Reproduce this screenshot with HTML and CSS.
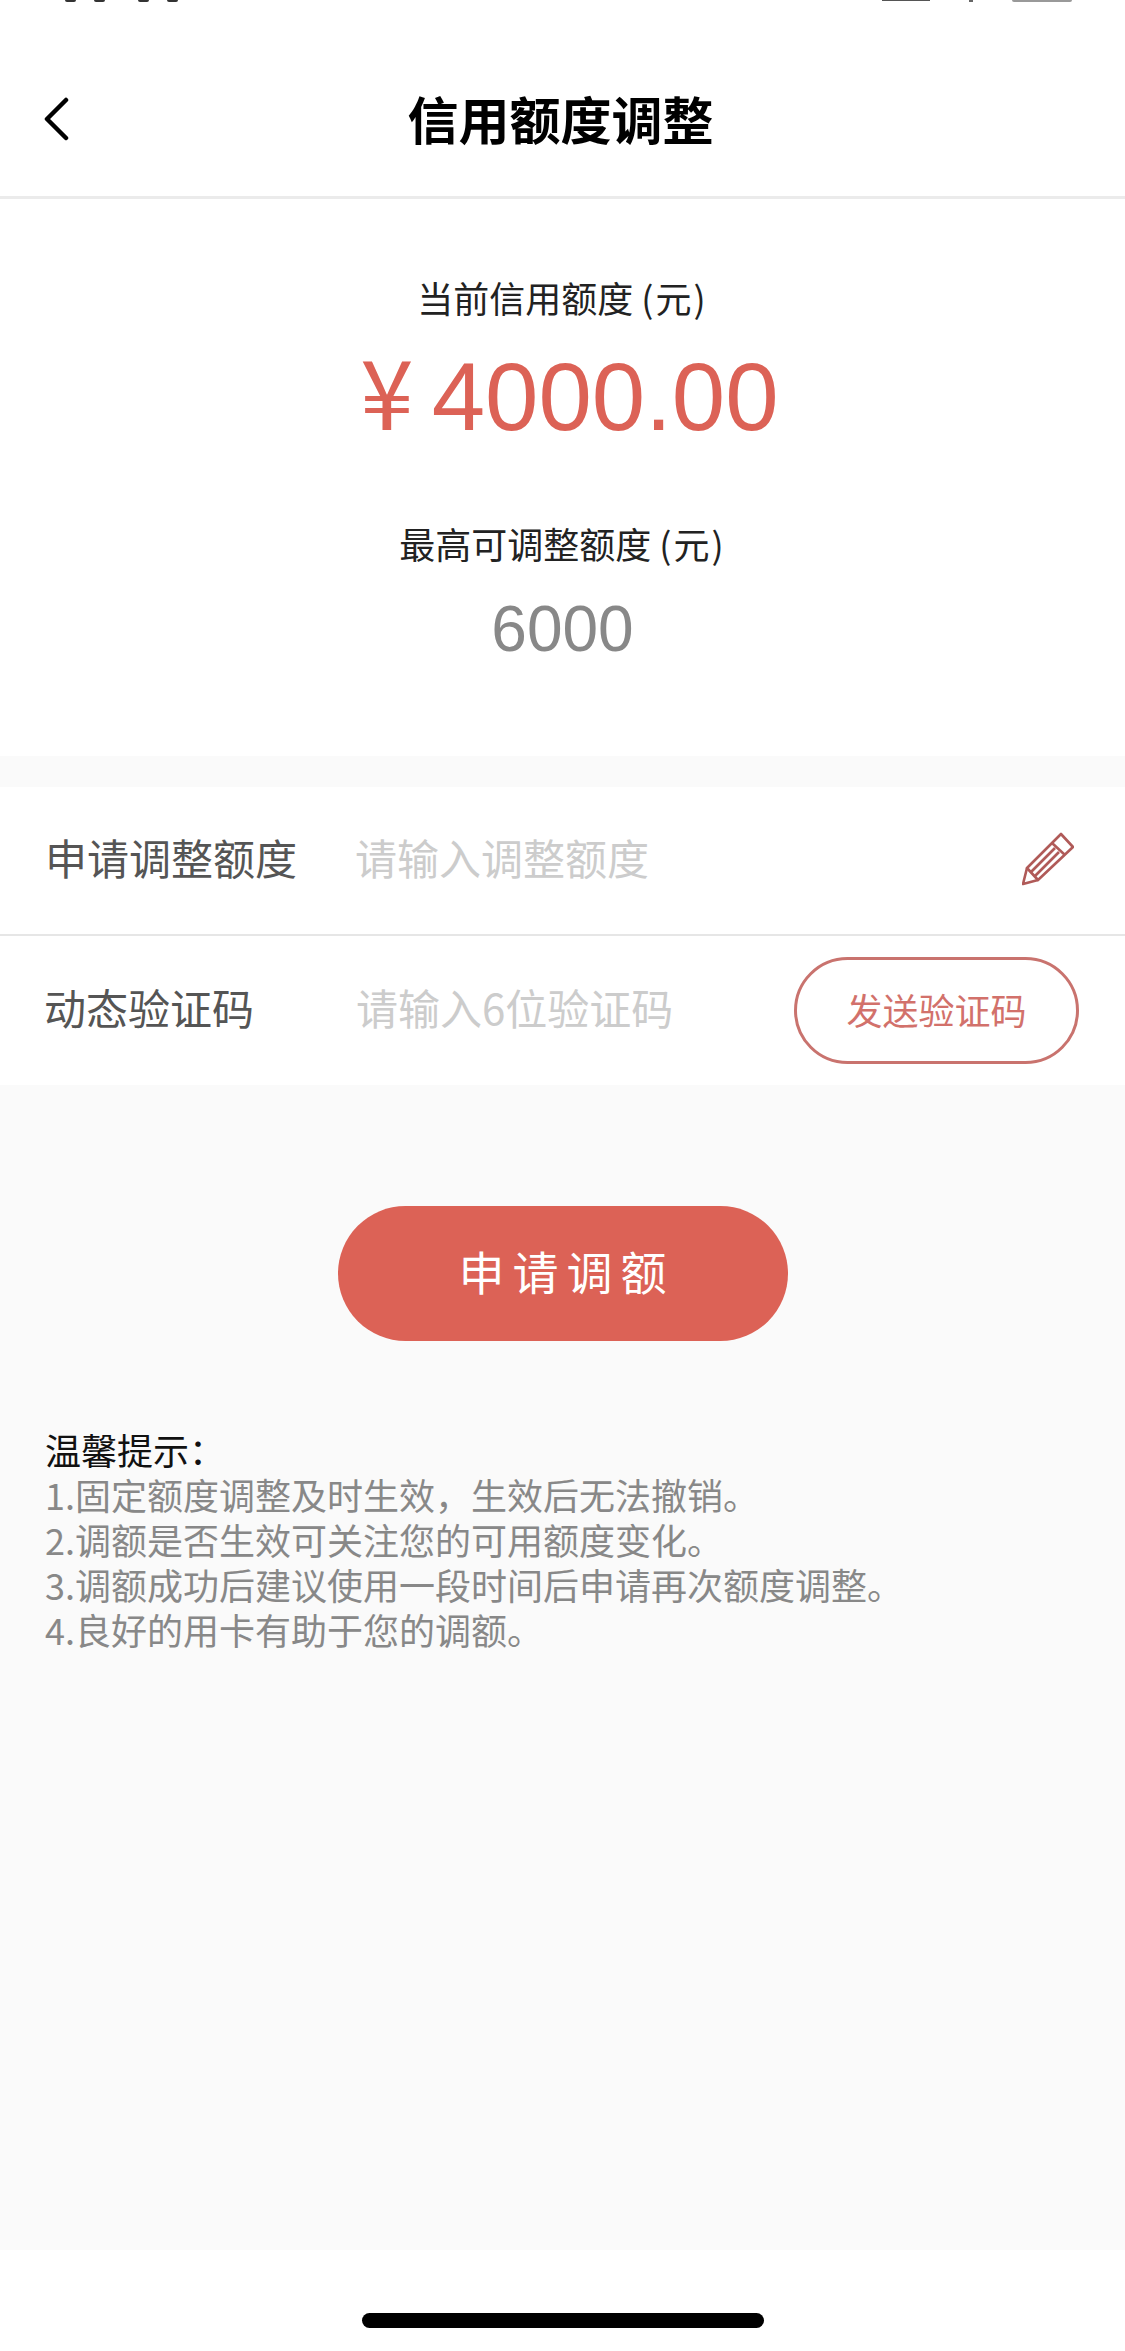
FILE: index.html
```html
<!DOCTYPE html>
<html lang="zh-CN">
<head>
    <meta charset="UTF-8">
    <meta name="viewport" content="width=device-width, initial-scale=1.0">
    <title>信用额度调整</title>
    <link rel="stylesheet" href="styles.css">
</head>
<body>
    <div class="status-bar">
        <span class="status-dot"></span>
        <span class="status-dot"></span>
        <span class="status-dot status-dot-wide"></span>
        <span class="status-dot"></span>
        <span class="status-signal"></span>
        <span class="status-wifi"></span>
        <span class="status-battery"></span>
    </div>
    <header class="nav-bar">
        <svg class="back-icon" viewBox="0 0 28 44" width="28" height="44">
            <path d="M24 3 L5 22 L24 41" fill="none" stroke="#000" stroke-width="4.5" stroke-linecap="round" stroke-linejoin="round"/>
        </svg>
        <h1 class="nav-title">信用额度调整</h1>
    </header>
    <section class="summary">
        <p class="summary-label">当前信用额度 <span class="summary-unit">(元)</span></p>
        <p class="summary-amount"><span class="summary-yen">¥</span>4000.00</p>
        <p class="summary-label summary-label-second">最高可调整额度 <span class="summary-unit">(元)</span></p>
        <p class="summary-max">6000</p>
    </section>
    <section class="form">
        <div class="form-row form-row-amount">
            <span class="form-label">申请调整额度</span>
            <span class="form-placeholder">请输入调整额度</span>
            <svg class="edit-icon" viewBox="0 0 52 54" width="52" height="54">
                <g fill="none" stroke="#b05a58" stroke-width="2.6" stroke-linejoin="round">
                    <path d="M5 36 L39 2 L51 15 L16 48 Z"/>
                    <path d="M5 36 L1 52 L16 48"/>
                    <path d="M30 11 L43 23"/>
                    <path d="M9 40 L33 16"/>
                    <path d="M13 44 L37 20"/>
                </g>
            </svg>
        </div>
        <div class="form-row form-row-code">
            <span class="form-label">动态验证码</span>
            <span class="form-placeholder">请输入6位验证码</span>
            <button class="send-btn">发送验证码</button>
        </div>
    </section>
    <main class="content">
        <button class="apply-btn">申请调额</button>
        <div class="tips">
            <p class="tips-title">温馨提示：</p>
            <p>1.固定额度调整及时生效，生效后无法撤销。</p>
            <p>2.调额是否生效可关注您的可用额度变化。</p>
            <p>3.调额成功后建议使用一段时间后申请再次额度调整。</p>
            <p>4.良好的用卡有助于您的调额。</p>
        </div>
    </main>
    <footer class="home-area">
        <div class="home-bar"></div>
    </footer>
</body>
</html>
```

FILE: styles.css
```css
* {
    box-sizing: border-box;
}
body {
    font-family: "Noto Sans CJK SC", "Liberation Sans", sans-serif;
    background-color: #fafafa;
    margin: 0;
    padding: 0;
    display: flex;
    flex-direction: column;
    min-height: 100vh;
}
p, h1 {
    margin: 0;
}
.status-bar {
    display: flex;
    align-items: flex-start;
    height: 3px;
    padding-left: 65px;
    overflow: hidden;
    background-color: #fff;
}
.status-dot {
    width: 11px;
    height: 2px;
    margin-right: 18px;
    background-color: #333;
    border-radius: 0 0 5px 5px;
}
.status-dot-wide {
    margin-left: 15px;
}
.status-signal {
    width: 48px;
    height: 1px;
    margin-left: 686px;
    background-color: #555;
}
.status-wifi {
    width: 4px;
    height: 2px;
    margin-left: 39px;
    background-color: #666;
}
.status-battery {
    width: 60px;
    height: 2px;
    margin-left: 39px;
    background-color: #999;
    border-radius: 0 0 3px 3px;
}
.nav-bar {
    position: relative;
    display: flex;
    align-items: center;
    justify-content: center;
    height: 196px;
    padding: 36px 4px 0 0;
    background-color: #fff;
    border-bottom: 3px solid #ebebeb;
}
.back-icon {
    position: absolute;
    left: 42px;
    top: 94px;
}
.nav-title {
    font-size: 51px;
    font-weight: 700;
    line-height: 60px;
    color: #000;
}
.summary {
    height: 557px;
    padding-top: 73px;
    text-align: center;
    background-color: #fff;
}
.summary-label {
    font-size: 36px;
    line-height: 50px;
    color: #222;
}
.summary-unit {
    letter-spacing: 2px;
}
.summary-label-second {
    margin-top: 66px;
}
.summary-amount {
    font-family: "Liberation Sans", sans-serif;
    font-size: 96px;
    line-height: 110px;
    margin-top: 12px;
    padding-left: 14px;
    color: #dc6256;
}
.summary-yen {
    font-family: "Noto Sans CJK SC", sans-serif;
    margin-right: 18px;
}
.summary-max {
    font-family: "Liberation Sans", sans-serif;
    font-size: 64px;
    line-height: 80px;
    margin-top: 21px;
    color: #888;
}
.form {
    margin-top: 31px;
    background-color: #fff;
}
.form-row {
    display: flex;
    align-items: center;
    padding-left: 45px;
}
.form-row-amount {
    height: 149px;
    padding-left: 45px;
    padding-right: 51px;
    border-bottom: 2px solid #e6e6e6;
}
.form-row-code {
    height: 149px;
    padding-left: 44px;
    padding-right: 46px;
}
.form-label {
    font-size: 42px;
    line-height: 60px;
    margin-bottom: 8px;
    color: #555;
}
.form-row-amount .form-label {
    width: 310px;
}
.form-row-code .form-label {
    width: 312px;
}
.form-placeholder {
    font-size: 42px;
    line-height: 60px;
    margin-bottom: 8px;
    color: #ccc;
}
.edit-icon {
    margin-left: auto;
    margin-top: -4px;
}
.send-btn {
    margin-left: auto;
    width: 285px;
    height: 107px;
    padding: 0 0 4px;
    font-family: inherit;
    font-size: 36px;
    color: #d2716b;
    background-color: #fff;
    border: 3px solid #c9736e;
    border-radius: 54px;
}
.content {
    flex-grow: 1;
    display: flex;
    flex-direction: column;
    padding: 121px 45px 0;
}
.apply-btn {
    align-self: center;
    width: 450px;
    height: 135px;
    padding: 0 0 8px 8px;
    font-family: inherit;
    font-size: 46px;
    letter-spacing: 8px;
    color: #fff;
    background-color: #dc6256;
    border: none;
    border-radius: 68px;
}
.tips {
    margin-top: 86px;
    font-size: 36px;
    line-height: 45px;
    color: #888;
}
.tips-title {
    color: #111;
}
.home-area {
    height: 101px;
    padding-top: 63px;
    display: flex;
    justify-content: center;
    background-color: #fff;
}
.home-bar {
    width: 402px;
    height: 15px;
    background-color: #000;
    border-radius: 8px;
}
```
